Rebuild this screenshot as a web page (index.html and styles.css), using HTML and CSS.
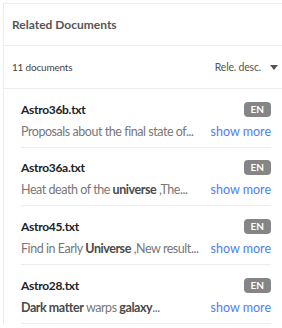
FILE: index.html
```html
<!DOCTYPE html>
<html lang="en">
<head>
    <meta charset="UTF-8">
    <meta name="viewport" content="width=device-width, initial-scale=1.0">
    <title>Related Documents</title>
    <link rel="stylesheet" href="styles.css">
</head>
<body>
    <div class="panel">
        <div class="panel-header">
            <h2>Related Documents</h2>
        </div>
        <div class="toolbar">
            <span class="count">11 documents</span>
            <span class="sort">Rele. desc. <span class="caret"></span></span>
        </div>
        <ul class="doc-list">
            <li class="doc">
                <div class="doc-top">
                    <span class="doc-name">Astro36b.txt</span>
                    <span class="lang">EN</span>
                </div>
                <div class="doc-bottom">
                    <span class="snippet">Proposals about the final state of...</span>
                    <a class="more" href="#">show more</a>
                </div>
            </li>
            <li class="doc">
                <div class="doc-top">
                    <span class="doc-name">Astro36a.txt</span>
                    <span class="lang">EN</span>
                </div>
                <div class="doc-bottom">
                    <span class="snippet">Heat death of the <b>universe</b> ,The...</span>
                    <a class="more" href="#">show more</a>
                </div>
            </li>
            <li class="doc">
                <div class="doc-top">
                    <span class="doc-name">Astro45.txt</span>
                    <span class="lang">EN</span>
                </div>
                <div class="doc-bottom">
                    <span class="snippet">Find in Early <b>Universe</b> ,New result...</span>
                    <a class="more" href="#">show more</a>
                </div>
            </li>
            <li class="doc">
                <div class="doc-top">
                    <span class="doc-name">Astro28.txt</span>
                    <span class="lang">EN</span>
                </div>
                <div class="doc-bottom">
                    <span class="snippet"><b>Dark matter</b> warps <b>galaxy</b>...</span>
                    <a class="more" href="#">show more</a>
                </div>
            </li>
        </ul>
    </div>
</body>
</html>
```

FILE: styles.css
```css
body {
    margin: 0;
    padding: 3px 0 0 3px;
    background: #fff;
    font-family: 'Lato', sans-serif;
    overflow: hidden;
}
.panel {
    border-top: 1px solid #ececec;
    border-left: 1px solid #ececec;
}
.panel-header {
    height: 41px;
    display: flex;
    align-items: center;
    padding-left: 8px;
    border-bottom: 1px solid #ececec;
}
.panel-header h2 {
    margin: 0;
    font-size: 12px;
    font-weight: 700;
    color: #555;
}
.toolbar {
    height: 42px;
    display: flex;
    align-items: center;
    justify-content: space-between;
    padding: 0 4px 0 8px;
    border-bottom: 1px solid #ececec;
}
.count {
    font-size: 10px;
    letter-spacing: -0.2px;
    color: #444;
}
.sort {
    font-size: 10.5px;
    letter-spacing: -0.2px;
    color: #555;
    display: flex;
    align-items: center;
}
.caret {
    display: inline-block;
    margin-left: 9px;
    border-left: 4px solid transparent;
    border-right: 4px solid transparent;
    border-top: 5px solid #555;
}
.doc-list {
    list-style: none;
    margin: 0;
    padding: 0 11px 0 17px;
}
.doc {
    padding: 12px 0 7.7px;
    border-bottom: 1px solid #ececec;
}
.doc-top {
    height: 16px;
    display: flex;
    align-items: center;
    justify-content: space-between;
}
.doc-name {
    font-size: 12px;
    letter-spacing: -0.3px;
    font-weight: 700;
    color: #222;
}
.lang {
    background: #858585;
    color: #fff;
    font-size: 10px;
    font-weight: 700;
    border-radius: 4px;
    padding: 1px 7px;
    line-height: 13px;
}
.doc-bottom {
    height: 16px;
    margin-top: 6px;
    display: flex;
    align-items: center;
    gap: 6px;
}
.snippet {
    font-size: 12.5px;
    letter-spacing: -0.45px;
    color: #777;
    white-space: nowrap;
}
.snippet b {
    color: #4a4a4a;
    font-weight: 700;
}
.more {
    margin-left: auto;
    font-size: 12.5px;
    color: #4b7ef2;
    text-decoration: none;
    white-space: nowrap;
}
```
